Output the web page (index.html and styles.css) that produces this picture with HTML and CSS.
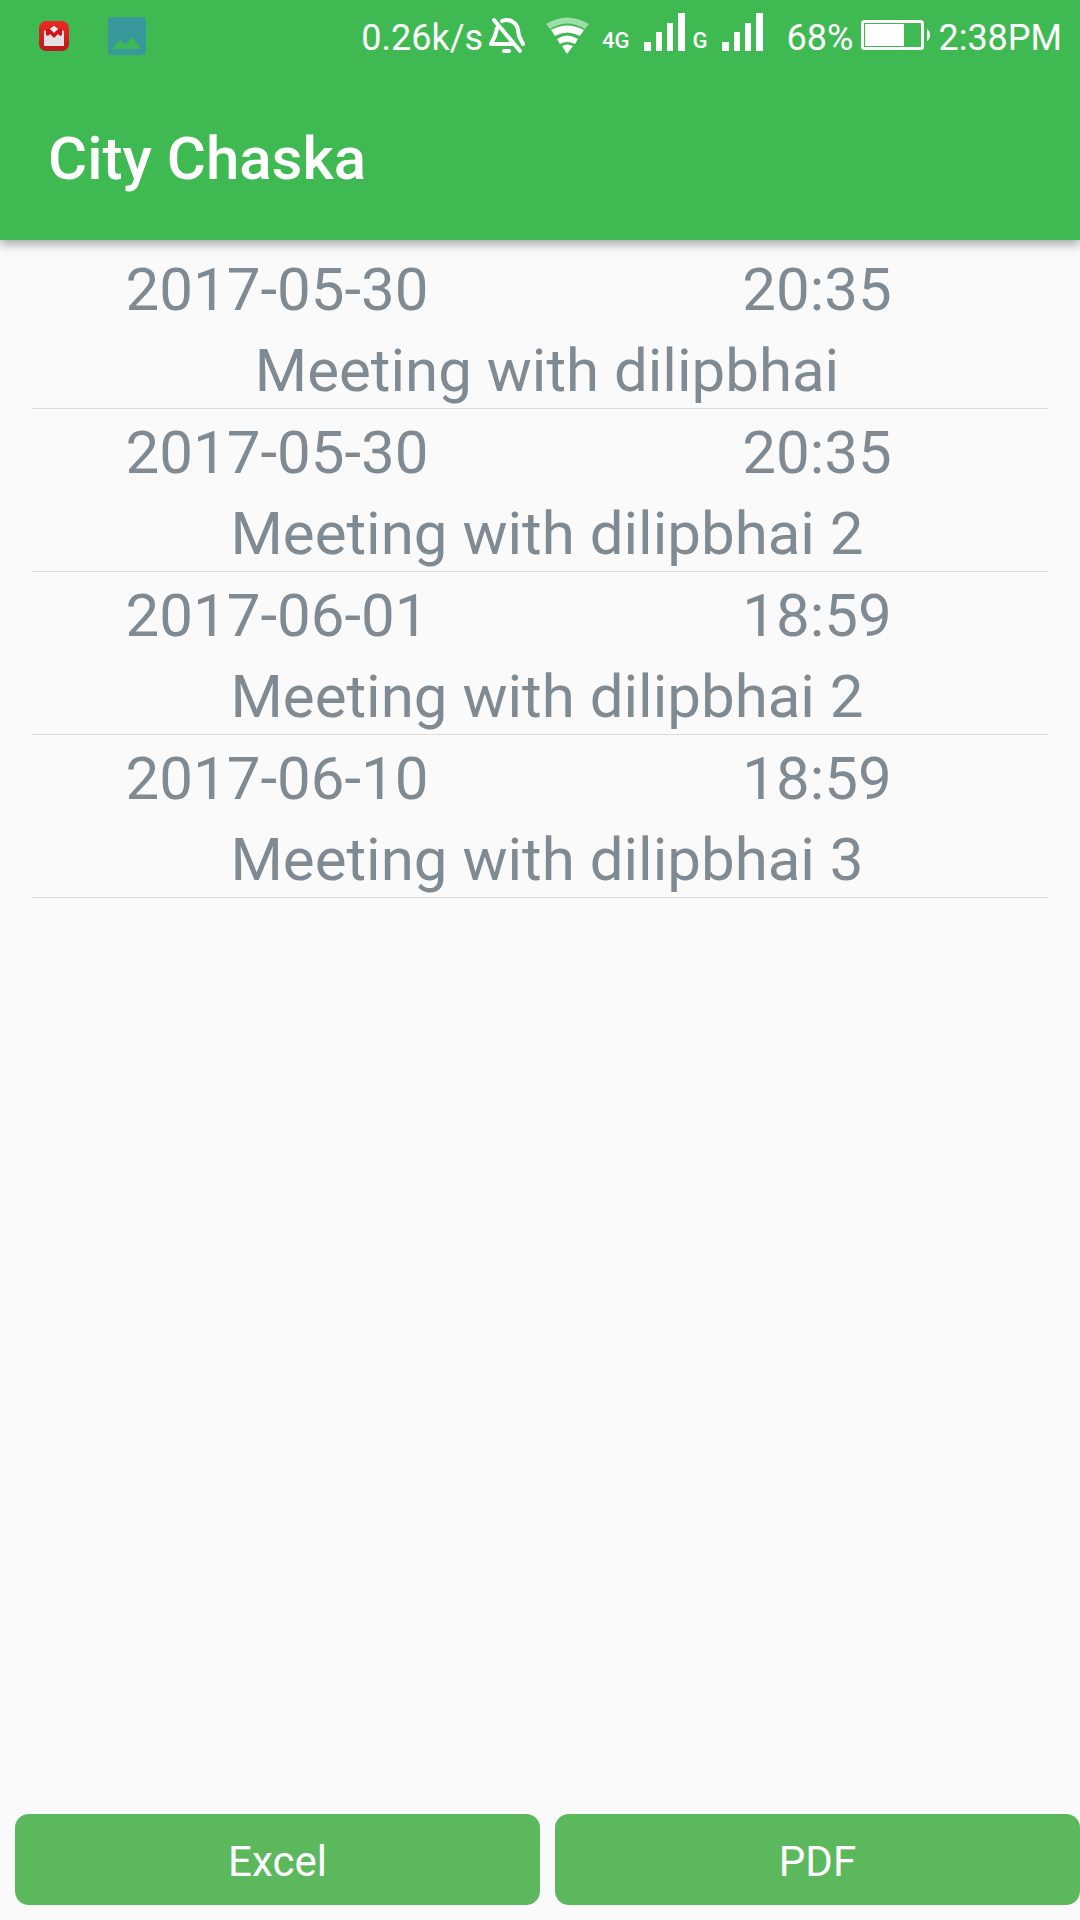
FILE: index.html
```
<!DOCTYPE html>
<html lang="en">
<head>
    <meta charset="UTF-8">
    <meta name="viewport" content="width=device-width, initial-scale=1.0">
    <title>City Chaska</title>
    <link rel="stylesheet" href="styles.css">
</head>
<body>
    <header class="header">
        <div class="status-bar">
            <div class="notifications">
                <svg width="30" height="30" viewBox="0 0 30 30">
                    <defs>
                        <linearGradient id="mail-red" x1="0" y1="0" x2="0" y2="1">
                            <stop offset="0" stop-color="#ee2a24"/>
                            <stop offset="1" stop-color="#b8191c"/>
                        </linearGradient>
                    </defs>
                    <rect width="30" height="30" rx="7" fill="url(#mail-red)"/>
                    <path d="M5 10L11 8L15 5L19 8L25 10V25H5z" fill="#e4dfe0"/>
                    <path d="M7 8H11L15 12L19 8H23V14L21 15L19 13L15 17L11 13L9 15L7 14z" fill="#d3131c"/>
                    <path d="M11 8L15 5L19 8L15 11z" fill="#f3eeee"/>
                </svg>
                <svg width="38" height="38" viewBox="0 0 38 38">
                    <path d="M4 0h30a4 4 0 0 1 4 4v30a4 4 0 0 1-4 4H4a4 4 0 0 1-4-4V4a4 4 0 0 1 4-4zM4 32h29L24 20l-7 8-5-5z" fill="#38989b" fill-rule="evenodd"/>
                </svg>
            </div>
            <div class="indicators">
                <span class="status-text">0.26k/s</span>
                <svg class="bell" width="38" height="38" viewBox="0 0 38 38" fill="none" stroke="#fff" stroke-width="4" stroke-linecap="round" stroke-linejoin="round">
                    <path d="M9 11L7 19L3 27H25"/>
                    <path d="M14 4C22 1 29 6 30 13L31 19L35 27"/>
                    <path d="M6 3L32 34"/>
                    <path d="M16 34H21"/>
                </svg>
                <svg class="wifi" width="43" height="38" viewBox="0 0 43 38" fill="#fff">
                    <path d="M0 7Q21 -6 43 7L39 12Q21 1 4 12Z" opacity=".5"/>
                    <path d="M5 13Q21 4 38 13L34 19Q21 12 9 19Z"/>
                    <path d="M11 22Q21 15 32 22L29 27Q21 23 14 27Z"/>
                    <path d="M16 29Q21 26 27 29L21 37Z"/>
                </svg>
                <span class="network">4G</span>
                <svg class="signal" width="41" height="46" viewBox="0 0 41 46" fill="#fff">
                    <rect x="0" y="29" width="7" height="9"/>
                    <rect x="12" y="19" width="6" height="19"/>
                    <rect x="23" y="10" width="6" height="28"/>
                    <rect x="34" y="0" width="7" height="38"/>
                </svg>
                <span class="network">G</span>
                <svg class="signal" width="41" height="46" viewBox="0 0 41 46" fill="#fff">
                    <rect x="0" y="29" width="7" height="9"/>
                    <rect x="12" y="19" width="6" height="19"/>
                    <rect x="23" y="10" width="6" height="28"/>
                    <rect x="34" y="0" width="7" height="38"/>
                </svg>
                <span class="status-text battery-level">68%</span>
                <svg class="battery" width="69" height="32" viewBox="0 0 69 32">
                    <rect x="1.5" y="1.5" width="60" height="27" rx="2" fill="none" stroke="#fff" stroke-width="3"/>
                    <rect x="4" y="4" width="39" height="22" fill="#fff"/>
                    <path d="M66 9q3 2 3 6t-3 6z" fill="#fff"/>
                </svg>
                <span class="status-text">2:38PM</span>
            </div>
        </div>
        <h1 class="title">City Chaska</h1>
    </header>

    <main class="content">
        <ul class="meetings">
            <li class="meeting">
                <time class="date">2017-05-30</time>
                <time class="time">20:35</time>
                <p class="note">Meeting with dilipbhai</p>
            </li>
            <li class="meeting">
                <time class="date">2017-05-30</time>
                <time class="time">20:35</time>
                <p class="note">Meeting with dilipbhai 2</p>
            </li>
            <li class="meeting">
                <time class="date">2017-06-01</time>
                <time class="time">18:59</time>
                <p class="note">Meeting with dilipbhai 2</p>
            </li>
            <li class="meeting">
                <time class="date">2017-06-10</time>
                <time class="time">18:59</time>
                <p class="note">Meeting with dilipbhai 3</p>
            </li>
        </ul>
    </main>

    <footer class="actions">
        <button type="button">Excel</button>
        <button type="button">PDF</button>
    </footer>
</body>
</html>
```
FILE: styles.css
```
* {
    box-sizing: border-box;
}
body {
    display: flex;
    flex-direction: column;
    min-height: 100vh;
    margin: 0;
    font-family: Roboto, "Noto Sans", sans-serif;
    background-color: #fafafa;
    color: #808a92;
}
svg {
    display: block;
    flex: none;
}
.header {
    background-color: #3fba52;
    color: #fff;
    box-shadow: 0 4px 10px rgba(0, 0, 0, 0.35);
}
.status-bar {
    display: flex;
    align-items: center;
    justify-content: space-between;
    height: 72px;
    padding: 0 18px 0 39px;
}
.notifications {
    display: flex;
    align-items: center;
    gap: 39px;
}
.indicators {
    display: flex;
    align-items: center;
    gap: 8px;
}
.status-text {
    padding-top: 3px;
    font-size: 36px;
    line-height: 42px;
}
.bell {
    margin-left: -3px;
}
.wifi {
    margin: 0 5px 0 12px;
}
.network {
    padding-top: 9px;
    font-size: 22px;
    font-weight: 500;
    line-height: 26px;
}
.signal {
    margin-left: 6px;
}
.battery-level {
    margin-left: 16px;
}
.title {
    margin: 0;
    padding: 52px 48px 46px;
    font-size: 60px;
    font-weight: 500;
    line-height: 70px;
}
.content {
    flex: 1;
    padding-top: 6px;
}
.meetings {
    margin: 0;
    padding: 0;
    list-style: none;
}
.meeting {
    display: grid;
    grid-template-columns: 1fr 1fr;
    column-gap: 14px;
    padding: 9px 0 0 14px;
    font-size: 60px;
    line-height: 70px;
    text-align: center;
}
.meeting::after {
    content: "";
    grid-column: 1 / -1;
    height: 1px;
    margin: 2px 32px 0 18px;
    background-color: #dcdcdc;
}
.note {
    grid-column: 1 / -1;
    margin: 11px 0 0;
}
.actions {
    display: flex;
    gap: 15px;
    padding: 15px 0 15px 15px;
}
button {
    flex: 1;
    padding: 22px 20px 18px;
    border: none;
    border-radius: 14px;
    background-color: #5cb85c;
    color: #fff;
    font-family: inherit;
    font-size: 42px;
    line-height: 51px;
    cursor: pointer;
}
```
